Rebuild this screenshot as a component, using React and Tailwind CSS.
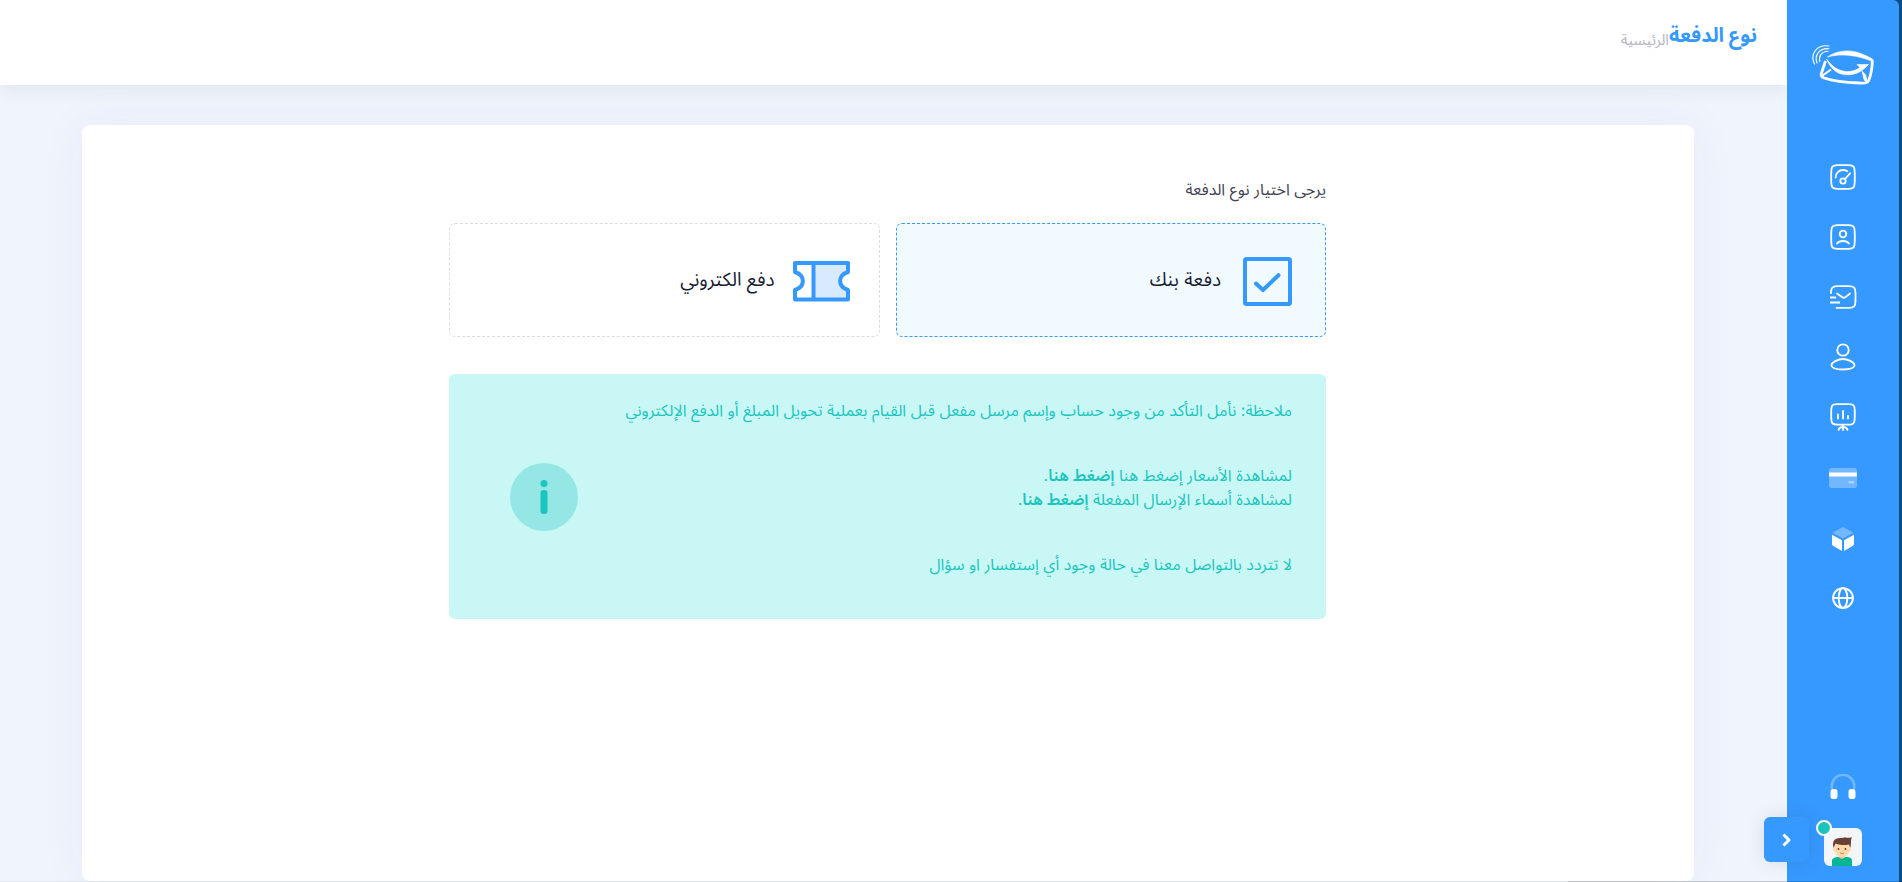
import React, { useState } from "react";

const DashboardIcon = () => (
  <svg width="26" height="26" viewBox="0 0 26 26" fill="none" stroke="currentColor" strokeWidth="1.8" strokeLinecap="round">
    <path d="M1.2 13C1.2 3.500 1 1.200 7.500 1.200H18.500C25 1.200 24.800 3.500 24.800 13S25 24.800 18.500 24.800H7.500C1 24.800 1.200 22.500 1.200 13Z" />
    <path d="M5.600 13.500C5.600 9 9 6 13 6C14.800 6 16.200 6.500 17.300 7.200" />
    <circle cx="13" cy="17" r="2.700" />
    <path d="M15 15L20 9.300" />
  </svg>
);

const ContactIcon = () => (
  <svg width="26" height="26" viewBox="0 0 26 26" fill="none" stroke="currentColor" strokeWidth="1.8" strokeLinecap="round">
    <path d="M1.2 13C1.2 3.500 1 1.200 7.500 1.200H18.500C25 1.200 24.800 3.500 24.800 13S25 24.800 18.500 24.800H7.500C1 24.800 1.200 22.500 1.200 13Z" />
    <circle cx="13" cy="10" r="3.300" />
    <path d="M7 19.500C8.500 17.700 10.600 17 13 17S17.500 17.700 19 19.500" />
  </svg>
);

const MessageIcon = () => (
  <svg width="28" height="26" viewBox="0 0 28 26" fill="none" stroke="currentColor" strokeWidth="1.800">
    <path d="M2 9V8C2 4 4 2.200 8 2.200H20C25 2.200 26.500 4 26.500 9V17C26.500 22 25 23.800 20 23.800H7.500" strokeLinecap="round" />
    <path d="M8 9.500L13 13.100C14.200 14 15.300 14 16.500 13.100L21 9.500" strokeLinecap="round" />
    <path d="M1 13.500H7M1 18.500H11" />
  </svg>
);

const UserIcon = () => (
  <svg width="26" height="28" viewBox="0 0 26 28" fill="none" stroke="currentColor" strokeWidth="1.800">
    <circle cx="13" cy="7" r="5.700" />
    <path d="M13 16C17 16 24.500 19 24.500 22.300C24.500 25.500 19.500 26.500 13 26.500S1.500 25.500 1.500 22.300C1.500 19 9 16 13 16Z" />
  </svg>
);

const ReportIcon = () => (
  <svg width="26" height="28" viewBox="0 0 26 28" fill="none" stroke="currentColor" strokeWidth="1.800" strokeLinecap="round">
    <path d="M1.200 11C1.200 3.500 1 1.200 7.500 1.200H18.500C25 1.200 24.800 3.500 24.800 11S25 21.700 18.500 21.700H7.500C1 21.700 1.200 19 1.200 11Z" />
    <path d="M8 11.500V15.500M13 8V15.500M18 13V15.500" />
    <path d="M13 22V27M8.500 27C9 25 10.500 24 13 24S17 25 17.500 27" />
  </svg>
);

const CardIcon = () => (
  <svg width="28" height="22" viewBox="0 0 28 22" fill="currentColor">
    <rect y="2" width="28" height="20" rx="2.500" opacity=".3" />
    <rect y="6.500" width="28" height="4" />
    <rect x="19.500" y="15" width="5.500" height="2.500" rx=".5" opacity=".4" />
  </svg>
);

const BoxIcon = () => (
  <svg width="22" height="28" viewBox="0 0 22 28" fill="currentColor">
    <path d="M11 4L21.500 9.700L11 15.500L.5 9.700Z" opacity=".3" />
    <path d="M0 11.700L10 17.300V28L1 22.800C.3 22.400 0 22 0 21.300ZM22 11.700L12 17.300V28L21 22.800C21.700 22.400 22 22 22 21.300Z" />
  </svg>
);

const GlobeIcon = () => (
  <svg width="22" height="24" viewBox="0 0 22 24" fill="none" stroke="currentColor" strokeWidth="1.900">
    <circle cx="11" cy="13" r="9.900" />
    <ellipse cx="11" cy="13" rx="4.300" ry="9.900" />
    <path d="M1 13H21" />
  </svg>
);

const HeadsetIcon = () => (
  <svg width="26" height="26" viewBox="0 0 26 26" fill="currentColor">
    <path d="M1.800 15V12A11.200 11.200 0 0 1 24.200 12V15" fill="none" stroke="currentColor" strokeWidth="2.500" opacity=".3" />
    <rect x=".5" y="15" width="7" height="10" rx="2.800" />
    <rect x="18.500" y="15" width="7" height="10" rx="2.800" />
  </svg>
);

const Logo = () => (
  <svg width="64" height="42" viewBox="0 0 64 42" fill="none" stroke="#fff">
    <g strokeWidth="1.100" strokeLinecap="round">
      <path d="M3.500 20C-1.500 10 6 0 18 2" />
      <path d="M6 19C3 11 8.500 4 18 4.700" />
      <path d="M8.800 17.500C7.500 12 10.500 7.500 17 7.300" />
    </g>
    <path d="M16.500 13C26 6 40 5 51 10C55 11.500 59 13.500 62 15.500L60.500 17C47 11.500 30 9 16.500 13Z" fill="#fff" strokeWidth=".6" />
    <path d="M61.300 16C61.300 24 60 31 57.500 37C56.500 39.300 53 39.500 48 39C34 38.500 22 37 13 34C10.500 33 9.700 32 10.200 30L14.500 17" strokeWidth="2.800" />
    <path d="M15.500 15C21 28 30 32.500 42 30.300C49 29 53 25 57.500 20.500L46 20.500L49 23.500C44 27 38 28.500 32 27C25 25.500 20 21 15.500 15Z" fill="#fff" strokeWidth=".6" />
    <path d="M11 32L20 25.500" strokeWidth="2" />
    <path d="M51 27L53 35C53.500 37 54.500 38 56.500 38.500L54.500 31Z" fill="#fff" strokeWidth=".8" />
  </svg>
);

const CheckSquareIcon = () => (
  <svg width="58" height="52" viewBox="0 0 58 52" fill="none" stroke="#3699FF" strokeWidth="4">
    <rect x="6" y="5" width="45" height="45" rx="1.500" />
    <path d="M17 29.500L24 36L39.500 21.200" strokeLinecap="round" strokeLinejoin="round" />
  </svg>
);

const TicketIcon = () => (
  <svg width="58" height="44" viewBox="0 0 58 44" fill="none" stroke="#3699FF" strokeWidth="4" strokeLinejoin="round">
    <path d="M21 5H55V14C44.500 17.500 44.500 28.500 55 32V41.500H21Z" fill="#D7EAFF" stroke="none" />
    <path d="M2 5H55V14C44.500 17.500 44.500 28.500 55 32V41.500H2V32C12.500 28.500 12.500 17.500 2 14Z" />
    <path d="M20.500 5V41" />
  </svg>
);

const Avatar = () => (
  <svg width="38" height="38" viewBox="0 0 38 38" className="rounded-md">
    <rect width="38" height="38" fill="#F3F6F9" />
    <path d="M8 38V33C8 30 11 29 14 29H22C26 29 28 30 28 33V38Z" fill="#04B794" />
    <path d="M15 25H21V29.500Q18 32 15 29.500Z" fill="#F0C48E" />
    <path d="M10.500 16H25.500V22C25.500 26 22 29 18 29S10.500 26 10.500 22Z" fill="#FFD9A8" />
    <circle cx="10.300" cy="21.500" r="1.500" fill="#FFD9A8" />
    <circle cx="25.700" cy="21.500" r="1.500" fill="#FFD9A8" />
    <path d="M9.500 20C8 14 10 10 16 10C20 9.500 24 10 28 9.200C26.500 11 27.500 16 26.300 20L25 16.500C20 17.500 15 17 11.500 15.500Z" fill="#6B4034" />
    <circle cx="14.500" cy="21" r=".9" fill="#5b4033" />
    <circle cx="21.500" cy="21" r=".9" fill="#5b4033" />
    <path d="M16 25Q18 26.200 20 25" stroke="#d48a66" fill="none" />
  </svg>
);

const menu = [
  { name: "لوحة التحكم", icon: DashboardIcon },
  { name: "جهات الاتصال", icon: ContactIcon },
  { name: "الرسائل", icon: MessageIcon },
  { name: "الحساب", icon: UserIcon },
  { name: "التقارير", icon: ReportIcon },
  { name: "المدفوعات", icon: CardIcon },
  { name: "الخدمات", icon: BoxIcon },
  { name: "اللغة", icon: GlobeIcon },
];

const paymentTypes = [
  { id: "bank", label: "دفعة بنك", icon: CheckSquareIcon },
  { id: "online", label: "دفع الكتروني", icon: TicketIcon },
];

const Sidebar = () => {
  return (
    <aside className="relative w-28 shrink-0 bg-[#3699FF] text-white rounded-tr-md flex flex-col items-center">
      <a href="#" aria-label="الرئيسية" className="mt-11">
        <Logo />
      </a>

      <nav className="mt-[61px] flex flex-col">
        {menu.map((item) => (
          <a
            key={item.name}
            href="#"
            aria-label={item.name}
            className="w-15 h-15 flex items-center justify-center"
          >
            <item.icon />
          </a>
        ))}
      </nav>

      <div className="mt-auto mb-4 flex flex-col items-center gap-7">
        <a href="#" aria-label="الدعم">
          <HeadsetIcon />
        </a>
        <a href="#" aria-label="الملف الشخصي" className="relative">
          <Avatar />
          <span className="absolute -top-2 -left-2 w-4 h-4 rounded-full bg-[#1BC5BD] border-2 border-white" />
        </a>
      </div>

      <button
        type="button"
        aria-label="القائمة"
        className="absolute bottom-5 -left-[23px] w-[45px] h-[45px] rounded-md bg-[#3699FF] flex items-center justify-center shadow-[0_0_20px_rgba(0,0,0,0.1)]"
      >
        <svg width="10" height="14" viewBox="0 0 10 14" fill="none" stroke="#fff" strokeWidth="3">
          <path d="M1.500 1.500L7 7L1.500 12.500" strokeLinejoin="round" />
        </svg>
      </button>
    </aside>
  );
};

const App = () => {
  const [type, setType] = useState("bank");

  return (
    <div
      dir="rtl"
      className="relative min-h-screen flex ps-[3px] bg-[#0D4C7F] font-['Inter','Noto_Sans','Noto_Sans_Arabic',sans-serif] text-base"
    >
      <Sidebar />

      <div className="flex-1 min-w-0 flex flex-col bg-[#EFF4FD]">
        <header className="h-[85px] shrink-0 bg-white px-[30px] pt-5 flex items-start shadow-[0_5px_16px_rgba(60,80,60,0.08)]">
          <h1 className="text-xl leading-[30px] font-bold text-[#3699FF]">
            نوع الدفعة
          </h1>
          <a href="#" className="text-[15px] leading-10 text-[#B5B5C3]">
            الرئيسية
          </a>
        </header>

        <main className="flex-1 flex pt-10 pb-px pr-[93px] pl-[82px]">
          <section className="flex-1 rounded-lg bg-white pl-8 pr-[33px] pt-[52px] shadow-[0_0_50px_rgba(82,63,105,0.05)]">
            <form className="w-full max-w-[877px] mx-auto">
              <fieldset>
                <legend className="leading-6 text-[#3F4254]">
                  يرجى اختيار نوع الدفعة
                </legend>
                <div className="mt-[22px] grid grid-cols-2 gap-4">
                  {paymentTypes.map((item) => (
                    <label
                      key={item.id}
                      className="relative h-[114px] px-7 flex items-center gap-[18px] rounded-md border border-dashed border-[#DCDCDC] has-checked:border-[#3699FF] has-checked:bg-[#F1FAFF] cursor-pointer"
                    >
                      <input
                        type="radio"
                        name="payment_type"
                        className="sr-only"
                        checked={type === item.id}
                        onChange={() => setType(item.id)}
                      />
                      <item.icon />
                      <span className="text-[19px] leading-7 text-[#181C32]">
                        {item.label}
                      </span>
                    </label>
                  ))}
                </div>
              </fieldset>

              <div className="mt-[37px] h-[245px] rounded-md bg-[#C9F7F5] text-[#1BC5BD] ps-[34px] pe-[61px] flex items-center justify-between">
                <div className="pb-5 leading-6">
                  <p>
                    ملاحظة: نأمل التأكد من وجود حساب وإسم مرسل مفعل قبل القيام
                    بعملية تحويل المبلغ أو الدفع الإلكتروني
                  </p>
                  <p className="mt-[41px]">
                    لمشاهدة الأسعار إضغط هنا{" "}
                    <a href="#" className="font-semibold">
                      إضغط هنا
                    </a>
                    .
                  </p>
                  <p>
                    لمشاهدة أسماء الإرسال المفعلة{" "}
                    <a href="#" className="font-semibold">
                      إضغط هنا
                    </a>
                    .
                  </p>
                  <p className="mt-[41px]">
                    لا تتردد بالتواصل معنا في حالة وجود أي إستفسار او سؤال
                  </p>
                </div>
                <svg width="68" height="68" viewBox="0 0 68 68" fill="currentColor">
                  <circle cx="34" cy="34" r="34" opacity=".3" />
                  <circle cx="34" cy="20.500" r="3.500" />
                  <rect x="30.500" y="27" width="7" height="24" rx="3" />
                </svg>
              </div>
            </form>
          </section>
        </main>
      </div>

      {/* page bottom edge */}
      <div className="absolute bottom-0 inset-x-0 h-px flex bg-black/5">
        <div className="w-[334px] bg-black/15" />
      </div>
    </div>
  );
};

export default App;
